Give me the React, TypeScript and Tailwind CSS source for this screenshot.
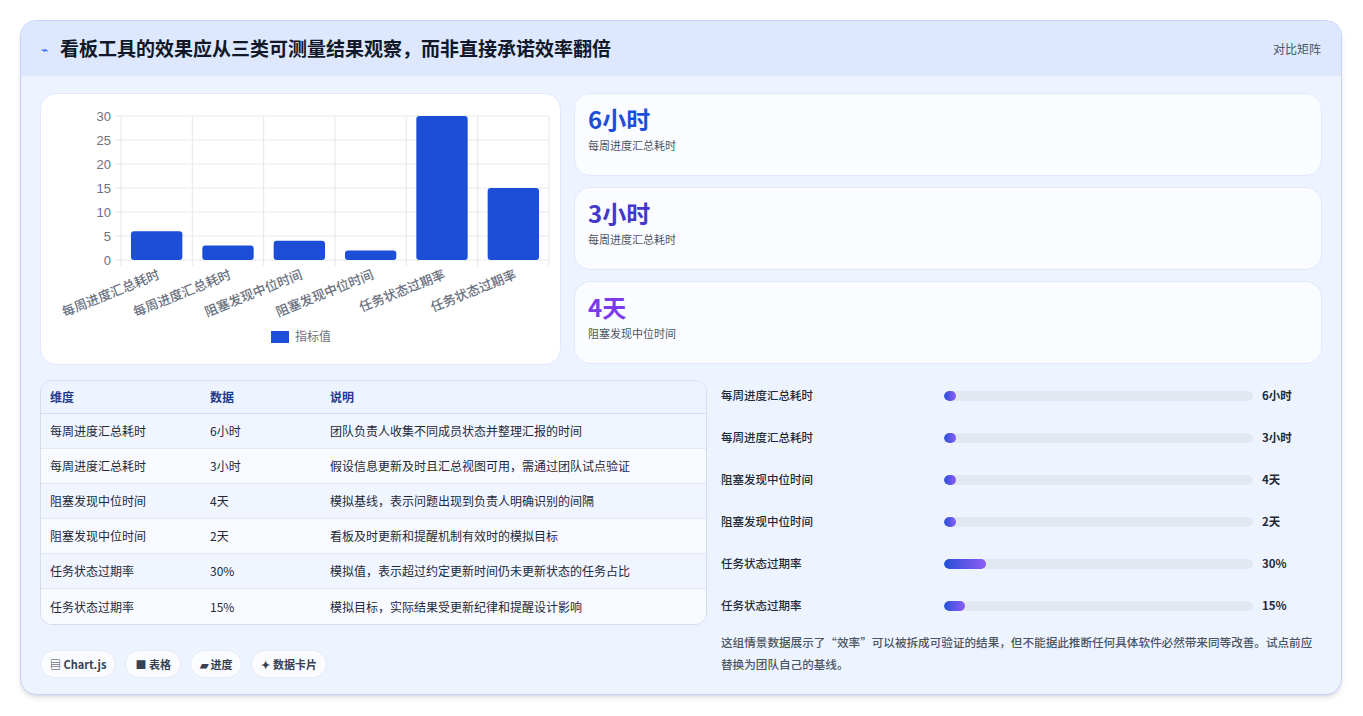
import React from "react";

const font = { fontFamily: '"Noto Sans CJK SC","Noto Sans",sans-serif' };

const bars = [
  { l: "每周进度汇总耗时", v: 6 },
  { l: "每周进度汇总耗时", v: 3 },
  { l: "阻塞发现中位时间", v: 4 },
  { l: "阻塞发现中位时间", v: 2 },
  { l: "任务状态过期率", v: 30 },
  { l: "任务状态过期率", v: 15 },
];

const rows = [
  ["每周进度汇总耗时", "6小时", "团队负责人收集不同成员状态并整理汇报的时间"],
  ["每周进度汇总耗时", "3小时", "假设信息更新及时且汇总视图可用，需通过团队试点验证"],
  ["阻塞发现中位时间", "4天", "模拟基线，表示问题出现到负责人明确识别的间隔"],
  ["阻塞发现中位时间", "2天", "看板及时更新和提醒机制有效时的模拟目标"],
  ["任务状态过期率", "30%", "模拟值，表示超过约定更新时间仍未更新状态的任务占比"],
  ["任务状态过期率", "15%", "模拟目标，实际结果受更新纪律和提醒设计影响"],
];

const prog = [
  ["每周进度汇总耗时", "6小时", 12],
  ["每周进度汇总耗时", "3小时", 12],
  ["阻塞发现中位时间", "4天", 12],
  ["阻塞发现中位时间", "2天", 12],
  ["任务状态过期率", "30%", 42],
  ["任务状态过期率", "15%", 21],
] as const;

function Chart() {
  const x0 = 80, x1 = 508, y0 = 22, y1 = 166;
  const cw = (x1 - x0) / 6;
  const u = (y1 - y0) / 30;
  return (
    <svg width="520" height="271" viewBox="0 0 520 271">
      {[0, 5, 10, 15, 20, 25, 30].map((t) => (
        <g key={t}>
          <line x1={x0 - 6} x2={x1} y1={y1 - t * u} y2={y1 - t * u} stroke="#e5e7eb" />
          <text x={x0 - 10} y={y1 - t * u + 5} textAnchor="end" fontSize="13" fill="#6b7280" fontFamily="Liberation Sans, sans-serif">{t}</text>
        </g>
      ))}
      {Array.from({ length: 7 }).map((_, i) => (
        <line key={i} x1={x0 + i * cw} x2={x0 + i * cw} y1={y0} y2={y1 + 6} stroke="#e5e7eb" />
      ))}
      {bars.map((b, i) => {
        const bw = cw * 0.72;
        const bx = x0 + i * cw + (cw - bw) / 2;
        return <rect key={i} x={bx} y={y1 - b.v * u} width={bw} height={b.v * u} rx="3" fill="#1d4ed8" />;
      })}
      {bars.map((b, i) => (
        <text key={"l" + i} transform={`translate(${x0 + i * cw + cw / 2 + 4},${y1 + 18}) rotate(-22)`} textAnchor="end" fontSize="13" fontWeight="500" fill="#6b7280" style={font}>{b.l}</text>
      ))}
      <rect x="230" y="237" width="18" height="12" fill="#1d4ed8" />
      <text x="254" y="247" fontSize="12" fill="#6b7280" style={font}>指标值</text>
    </svg>
  );
}

export default function App() {
  return (
    <div className="w-[1363px] h-[716px] bg-white pt-[20px] px-[20px]" style={font}>
      <div className="w-[1322px] h-[675px] rounded-2xl border border-[#c7d2fe] bg-[#eef4ff] overflow-hidden shadow-md">
        <div className="h-[55px] bg-[#dde7fd] flex items-center justify-between px-5">
          <div className="flex items-center gap-3">
            <span className="text-[#2563eb] text-xs">⌁</span>
            <span className="text-[19px] font-bold text-[#111827]">看板工具的效果应从三类可测量结果观察，而非直接承诺效率翻倍</span>
          </div>
          <span className="text-[12px] text-[#4b5563]">对比矩阵</span>
        </div>
        <div className="px-[19px] pt-[17px]">
          <div className="flex gap-[13px]">
            <div className="w-[521px] h-[272px] bg-white rounded-2xl border border-[#e0e7ff]">
              <Chart />
            </div>
            <div className="flex-1 flex flex-col gap-[11px]">
              {[
                ["6小时", "每周进度汇总耗时", "text-[#1d4ed8]"],
                ["3小时", "每周进度汇总耗时", "text-[#4338ca]"],
                ["4天", "阻塞发现中位时间", "text-[#7c3aed]"],
              ].map(([v, l, c], i) => (
                <div key={i} className="h-[83px] bg-[#fbfcff] rounded-2xl border border-[#e0e7ff] px-[13px] pt-[9px]">
                  <div className={`text-[24px] font-bold leading-[32px] ${c}`}>{v}</div>
                  <div className="text-[11px] text-[#4b5563] mt-[2px]">{l}</div>
                </div>
              ))}
            </div>
          </div>
          <div className="flex gap-[14px] mt-[15px]">
            <div className="w-[667px]">
              <div className="rounded-xl border border-[#d5dcec] overflow-hidden text-[12px]">
                <div className="flex h-[33px] items-center bg-[#eef4ff] text-[#1e3a8a] font-semibold border-b border-[#d5dcec]">
                  <div className="w-[169px] pl-[9px]">维度</div>
                  <div className="w-[120px]">数据</div>
                  <div className="flex-1">说明</div>
                </div>
                {rows.map((r, i) => (
                  <div key={i} className={`flex h-[35px] items-center text-[#1f2937] ${i % 2 === 0 ? "bg-[#f0f5ff]" : "bg-[#f8faff]"} ${i < 5 ? "border-b border-[#e3e8f2]" : ""}`}>
                    <div className="w-[169px] pl-[9px]">{r[0]}</div>
                    <div className="w-[120px]">{r[1]}</div>
                    <div className="flex-1">{r[2]}</div>
                  </div>
                ))}
              </div>
              <div className="flex gap-[9px] mt-[25px] text-[11px] text-[#374151]">
                {["▤ Chart.js", "■ 表格", "▰ 进度", "✦ 数据卡片"].map((p) => (
                  <span key={p} className="h-[28px] px-[9px] flex items-center rounded-full bg-white/70 border border-[#e5eaf3] font-semibold">{p}</span>
                ))}
              </div>
            </div>
            <div className="flex-1 -mt-[5px]">
              <div className="flex flex-col">
                {prog.map(([l, v, w], i) => (
                  <div key={i} className="h-[42px] flex items-center text-[11.5px] font-medium text-[#1f2937]">
                    <div className="w-[223px]">{l}</div>
                    <div className="w-[309px] h-[10px] rounded-full bg-[#e2e8f0] overflow-hidden">
                      <div className="h-full rounded-full bg-gradient-to-r from-[#1d4ed8] to-[#8b5cf6]" style={{ width: w }} />
                    </div>
                    <div className="ml-[9px] font-semibold">{v}</div>
                  </div>
                ))}
              </div>
              <p className="text-[11.6px] leading-[22px] text-[#4b5563] font-medium mt-[4px] pr-[6px]">
                这组情景数据展示了“效率”可以被拆成可验证的结果，但不能据此推断任何具体软件必然带来同等改善。试点前应替换为团队自己的基线。
              </p>
            </div>
          </div>
        </div>
      </div>
    </div>
  );
}
